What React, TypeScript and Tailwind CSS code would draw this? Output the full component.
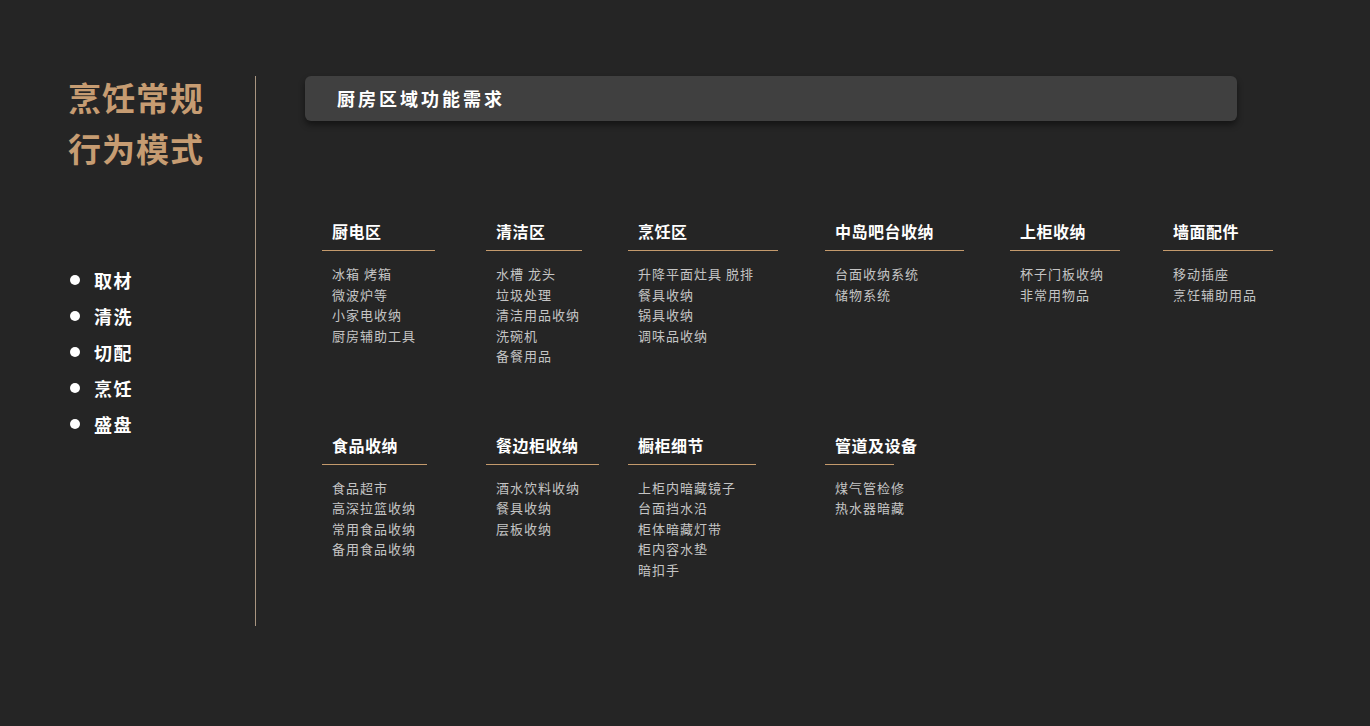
const F = { fontFamily: '"Noto Sans CJK SC", "Noto Sans", sans-serif' };
const row1 = [
  { t: '厨电区', w: 113, items: ['冰箱 烤箱', '微波炉等', '小家电收纳', '厨房辅助工具'] },
  { t: '清洁区', w: 96, items: ['水槽 龙头', '垃圾处理', '清洁用品收纳', '洗碗机', '备餐用品'] },
  { t: '烹饪区', w: 150, items: ['升降平面灶具 脱排', '餐具收纳', '锅具收纳', '调味品收纳'] },
  { t: '中岛吧台收纳', w: 139, items: ['台面收纳系统', '储物系统'] },
  { t: '上柜收纳', w: 110, items: ['杯子门板收纳', '非常用物品'] },
  { t: '墙面配件', w: 110, items: ['移动插座', '烹饪辅助用品'] },
];
const row2 = [
  { t: '食品收纳', w: 105, items: ['食品超市', '高深拉篮收纳', '常用食品收纳', '备用食品收纳'] },
  { t: '餐边柜收纳', w: 113, items: ['酒水饮料收纳', '餐具收纳', '层板收纳'] },
  { t: '橱柜细节', w: 128, items: ['上柜内暗藏镜子', '台面挡水沿', '柜体暗藏灯带', '柜内容水垫', '暗扣手'] },
  { t: '管道及设备', w: 69, items: ['煤气管检修', '热水器暗藏'] },
];
function Row({ data }: { data: typeof row1 }) {
  return (
    <div className="grid grid-cols-[164px_142px_197px_185px_153px_110px]">
      {data.map((c) => (
        <div key={c.t}>
          <div className="h-[33px] pt-[3px] border-b border-[#c49a6c] pl-[10px] text-[16px] font-bold leading-[20px] text-white whitespace-nowrap tracking-[0.5px]" style={{ width: c.w }}>{c.t}</div>
          <div className="mt-[13px] pl-[10px] text-[13px] leading-[20.5px] text-[#c4c4c4] tracking-[1px] whitespace-nowrap">
            {c.items.map((i) => <div key={i}>{i}</div>)}
          </div>
        </div>
      ))}
    </div>
  );
}
export default function App() {
  return (
    <div className="w-[1370px] h-[726px] bg-[#252525] flex pt-[76px]" style={F}>
      <div className="w-[255px] pl-[68px] shrink-0">
        <div className="text-[33px] font-bold leading-[51px] text-[#c69c72] mt-[-4px] tracking-[1px]">烹饪常规<br />行为模式</div>
        <div className="mt-[95px] flex flex-col gap-[14px]">
          {['取材', '清洗', '切配', '烹饪', '盛盘'].map((s) => (
            <div key={s} className="flex items-center h-[22px]">
              <span className="w-[10px] h-[10px] rounded-full bg-white ml-[2px]" />
              <span className="ml-[14px] text-[18px] font-bold text-white tracking-[1.5px]">{s}</span>
            </div>
          ))}
        </div>
      </div>
      <div className="w-px h-[550px] bg-[#a89580]" />
      <div className="pl-[49px]">
        <div className="w-[932px] h-[45px] rounded-[6px] bg-[#404040] shadow-[0_4px_6px_rgba(0,0,0,0.45)] flex items-center pl-[32px] text-[18px] font-bold text-white tracking-[3px]">厨房区域功能需求</div>
        <div className="ml-[17px] mt-[97px]"><Row data={row1} /></div>
        <div className="ml-[17px] mt-[65px]"><Row data={row2 as typeof row1} /></div>
      </div>
    </div>
  );
}
